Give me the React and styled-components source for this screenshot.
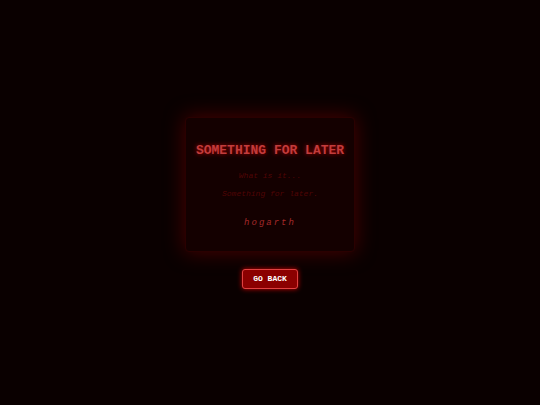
import React from "react";
import styled, { createGlobalStyle } from "styled-components";

export default function App() {
  return (
    <>
      <GlobalStyle />
      <Page>
        <Card>
          <Title>SOMETHING FOR LATER</Title>
          <Line>What is it...</Line>
          <Line>Something for later.</Line>
          <Signature>hogarth</Signature>
        </Card>
        <BackButton type="button">GO BACK</BackButton>
      </Page>
    </>
  );
}

const GlobalStyle = createGlobalStyle`
  * {
    box-sizing: border-box;
  }

  body {
    margin: 0;
    background-color: #0a0000;
    font-family: "Courier New", "Liberation Mono", monospace;
  }
`;

const Page = styled.main`
  display: flex;
  flex-direction: column;
  align-items: center;
  justify-content: center;
  gap: 17px;
  min-height: 100vh;
`;

const Card = styled.section`
  padding: 25px 10px 22px 10px;
  border: 1px solid #2a0000;
  border-radius: 4px;
  background-color: #140000;
  box-shadow: 0 0 20px rgba(139, 0, 0, 0.5);
  text-align: center;
`;

const Title = styled.h1`
  margin: 0 0 12px 0;
  font-size: 13px;
  line-height: 16px;
  white-space: nowrap;
  color: #c23c3c;
  text-shadow: 0 0 4px #b00000;
`;

const Line = styled.p`
  margin: 0 0 8px 0;
  font-size: 8px;
  font-style: italic;
  line-height: 10px;
  color: #500505;
`;

const Signature = styled.p`
  margin: 18px 0 0 0;
  font-size: 9px;
  font-style: italic;
  line-height: 12px;
  letter-spacing: 2px;
  color: #a52a2a;
`;

const BackButton = styled.button`
  padding: 4px 10px;
  border: 1px solid #e04040;
  border-radius: 3px;
  background-color: #8b0000;
  box-shadow: 0 0 5px #cc0000;
  font-family: inherit;
  font-size: 8px;
  font-weight: bold;
  line-height: 10px;
  color: #fff;
  cursor: pointer;
`;
